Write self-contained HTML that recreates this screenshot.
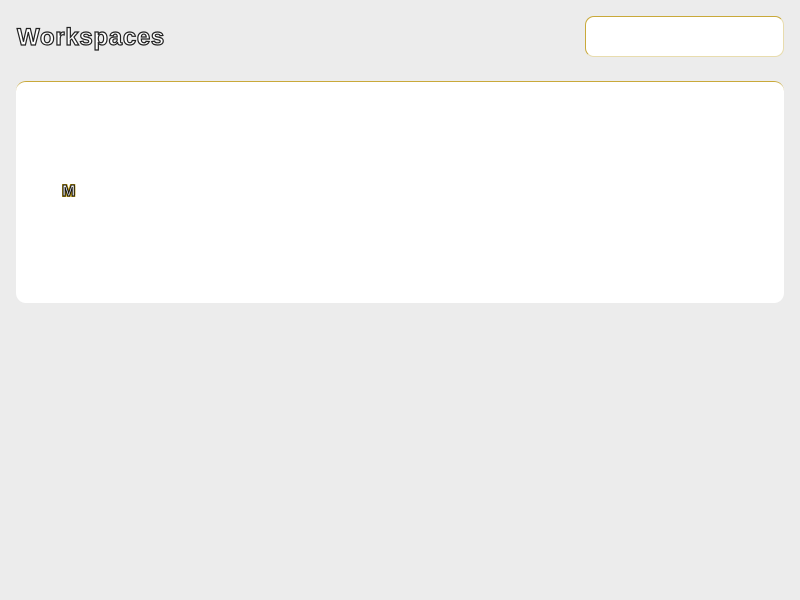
<!DOCTYPE html>
<html><head><meta charset="utf-8"><style>
html,body{margin:0;padding:0;width:800px;height:600px;background:#ececec;overflow:hidden;font-family:"Liberation Sans",sans-serif;}
h1{position:absolute;left:17px;top:23px;margin:0;font-size:24px;font-weight:bold;color:#fff;-webkit-text-stroke:1.2px #222;letter-spacing:0.7px;line-height:30px;}
.search{position:absolute;left:585px;top:16px;width:199px;height:41px;box-sizing:border-box;background:#fff;border-radius:9px;border:1px solid #e8dcae;border-top-color:#c9a93a;border-left-color:#c9a93a;}
.card{position:absolute;left:16px;top:81px;width:768px;height:222px;box-sizing:border-box;background:#fff;border-radius:10px;border-top:1px solid #c9a93a;}
.m{position:absolute;left:62px;top:184px;font-size:16px;font-weight:bold;color:#fff;-webkit-text-stroke:1px #111;text-shadow:1px 1px 0 #b8940a,-1px -1px 0 #b8940a,1px -1px 0 #b8940a,-1px 1px 0 #b8940a;line-height:16px;}
</style></head><body>
<h1>Workspaces</h1>
<div class="search"></div>
<div class="card"></div>
<div class="m">M</div>
</body></html>
